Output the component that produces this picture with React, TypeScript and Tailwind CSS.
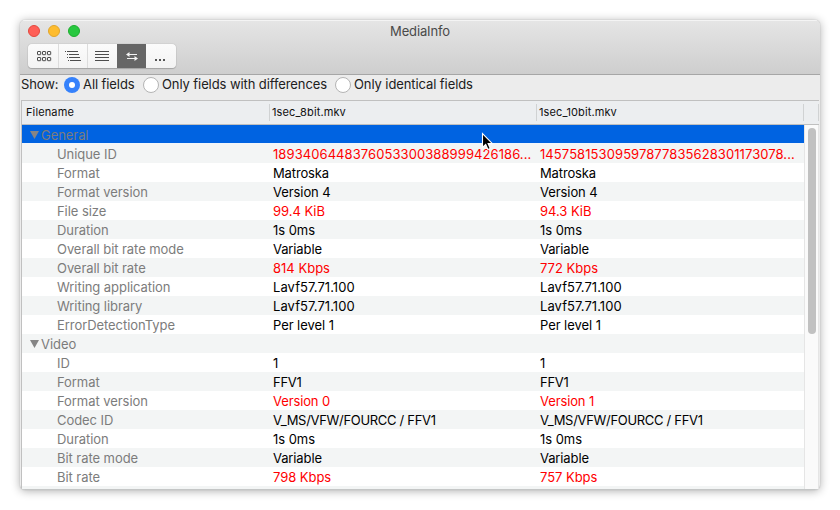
import React from "react";

type Row = { name: string; a?: string; b?: string; diff?: boolean; group?: boolean; spacing?: string };

const rows: Row[] = [
  { name: "General", group: true },
  { name: "Unique ID", a: "1893406448376053300388999426186...", b: "14575815309597877835628301173078...", diff: true, spacing: "tracking-[0.08px]" },
  { name: "Format", a: "Matroska", b: "Matroska", spacing: "tracking-[-0.13px]" },
  { name: "Format version", a: "Version 4", b: "Version 4", spacing: "tracking-[-0.08px]" },
  { name: "File size", a: "99.4 KiB", b: "94.3 KiB", diff: true, spacing: "tracking-[-0.04px]" },
  { name: "Duration", a: "1s 0ms", b: "1s 0ms", spacing: "tracking-[-0.05px]" },
  { name: "Overall bit rate mode", a: "Variable", b: "Variable", spacing: "tracking-[-0.12px]" },
  { name: "Overall bit rate", a: "814 Kbps", b: "772 Kbps", diff: true, spacing: "tracking-[0.01px]" },
  { name: "Writing application", a: "Lavf57.71.100", b: "Lavf57.71.100", spacing: "tracking-[0.06px]" },
  { name: "Writing library", a: "Lavf57.71.100", b: "Lavf57.71.100", spacing: "tracking-[0.06px]" },
  { name: "ErrorDetectionType", a: "Per level 1", b: "Per level 1", spacing: "tracking-[-0.06px]" },
  { name: "Video", group: true },
  { name: "ID", a: "1", b: "1" },
  { name: "Format", a: "FFV1", b: "FFV1", spacing: "tracking-[-0.25px]" },
  { name: "Format version", a: "Version 0", b: "Version 1", diff: true, spacing: "tracking-[-0.12px]" },
  { name: "Codec ID", a: "V_MS/VFW/FOURCC / FFV1", b: "V_MS/VFW/FOURCC / FFV1", spacing: "tracking-[-0.31px]" },
  { name: "Duration", a: "1s 0ms", b: "1s 0ms", spacing: "tracking-[-0.05px]" },
  { name: "Bit rate mode", a: "Variable", b: "Variable", spacing: "tracking-[-0.12px]" },
  { name: "Bit rate", a: "798 Kbps", b: "757 Kbps", diff: true, spacing: "tracking-[-0.04px]" },
  { name: "" },
];

function GridIcon() {
  return (
    <svg className="ml-[2px]" width="15" height="11" viewBox="0 0 15 11" fill="none" stroke="#4d4d4d">
      {[0.5, 6.5].map((y) => [0.5, 5.5, 10.5].map((x) => <rect key={`${x}-${y}`} x={x} y={y} width="3.2" height="3.2" rx="0.4" />))}
    </svg>
  );
}

function TreeIcon() {
  return (
    <svg width="16" height="11" viewBox="0 0 16 11" stroke="#4d4d4d">
      <path d="M0 .5h1M2 .5h11M2 3.5h1M4 3.5h10M2 6.5h1M4 6.5h11M3 9.5h1M5 9.5h11" />
    </svg>
  );
}

function LinesIcon() {
  return (
    <svg className="mr-[2px]" width="14" height="11" viewBox="0 0 14 11" stroke="#4d4d4d">
      <path d="M0 .5h14M0 3.5h14M0 6.5h14M0 9.5h14" />
    </svg>
  );
}

function SwapIcon() {
  return (
    <svg width="12" height="9" viewBox="0 0 12 9" fill="#f4f4f4">
      <path d="M0 2.5 3.5 0v2H11v1H3.5v2zM12 6.5 8.5 4v2H1v1h7.5v2z" />
    </svg>
  );
}

function Radio({ label, on }: { label: string; on?: boolean }) {
  return (
    <div className="flex items-center">
      <div className={`flex size-4 shrink-0 items-center justify-center rounded-full ${on ? "bg-[#3581fb]" : "border border-[#b4b4b4] bg-white"}`}>
        {on && <div className="size-1.5 rounded-full bg-white" />}
      </div>
      <span className="ml-[3px] text-[13px] tracking-[-0.09px] text-[#202020]">{label}</span>
    </div>
  );
}

function Line({ row, index }: { row: Row; index: number }) {
  const bg = index === 0 ? "bg-[#0063e1] border-b border-[#f0f5fb]" : index % 2 ? "bg-[#f3f5f5]" : "bg-white";
  const color = row.diff ? "text-[#ff0000]" : "text-black";
  const spacing = row.spacing ?? "";
  return (
    <div className={`flex h-[19px] shrink-0 items-center pt-[2px] text-[13px] leading-[17px] whitespace-pre ${bg}`}>
      <div className={`flex w-[251px] shrink-0 items-center tracking-[-0.06px] text-[#7c7c7c] ${row.group ? "pl-2" : "pl-[35px]"}`}>
        {row.group && (
          <svg className="mr-0.5 mb-px shrink-0" width="9" height="8" viewBox="0 0 9 8" fill="#858585">
            <path d="M0 0h9L4.5 8z" />
          </svg>
        )}
        <span>{row.name}</span>
      </div>
      <span className={`w-[267px] shrink-0 ${color} ${spacing}`}>{row.a}</span>
      <span className={`${color} ${spacing}`}>{row.b}</span>
    </div>
  );
}

export default function App() {
  return (
    <div className="relative h-[510px] w-[840px] overflow-hidden bg-white p-5 font-['Inter',sans-serif]">
      <div className="flex h-[470px] w-[800px] flex-col overflow-hidden rounded-[5px] bg-[#ececec] shadow-[0_0_1px_#999,0_1px_10px_rgba(0,0,0,0.32)]">
        <div className="flex h-[55px] shrink-0 flex-col border-t border-b border-t-[#f4f4f4] border-b-[#a6a6a6] bg-linear-to-b from-[#e5e5e5] to-[#cecece]">
          <div className="grid h-[21px] grid-cols-3 items-center">
            <div className="flex gap-2 pb-px pl-2">
              <div className="size-3 rounded-full border border-[#e2483e] bg-[#ff5f57]" />
              <div className="size-3 rounded-full border border-[#e1a52a] bg-[#febc2e]" />
              <div className="size-3 rounded-full border border-[#1dad2e] bg-[#28c840]" />
            </div>
            <div className="pt-px text-center text-[13px] tracking-[-0.15px] text-[#4a4a4a]">MediaInfo</div>
          </div>
          <div className="mt-[2px] ml-2 flex h-6 w-[148px] overflow-hidden rounded-[4px] bg-linear-to-b from-[#fbfbfb] to-[#f3f3f3] shadow-[0_0_1px_#888,0_1px_1px_rgba(0,0,0,0.2)]">
            <div className="flex w-[31px] items-center justify-center border-r border-[#dcdcdc]"><GridIcon /></div>
            <div className="flex w-[29px] items-center justify-center border-r border-[#dcdcdc]"><TreeIcon /></div>
            <div className="flex w-[29px] items-center justify-center"><LinesIcon /></div>
            <div className="flex w-[29px] items-center justify-center bg-[#666]"><SwapIcon /></div>
            <div className="flex flex-1 items-center gap-[2px] pt-2 pl-[9px]">
              <i className="size-[2px] bg-[#555]" /><i className="size-[2px] bg-[#555]" /><i className="size-[2px] bg-[#555]" />
            </div>
          </div>
        </div>
        <div className="flex h-[25px] shrink-0 items-center pb-[6px] pl-px text-[13px] text-[#202020]">
          <span className="w-[43px] shrink-0 tracking-[-0.15px]">Show:</span>
          <div className="w-[79px] shrink-0 whitespace-nowrap"><Radio label="All fields" on /></div>
          <div className="w-[192px] shrink-0 whitespace-nowrap"><Radio label="Only fields with differences" /></div>
          <Radio label="Only identical fields" />
        </div>
        <div className="mr-px ml-px flex min-h-0 flex-1 flex-col border-t border-l border-[#c0c0c0]">
          <div className="flex h-6 shrink-0 items-center border-b border-[#bfbfbf] bg-[#eceef0] text-[11px] tracking-[0.12px] text-[#101010]">
            <span className="w-[247px] shrink-0 pl-1">Filename</span>
            <div className="h-[17px] w-px bg-[#d0d2d3]" />
            <span className="w-[266px] shrink-0 pl-[2px]">1sec_8bit.mkv</span>
            <div className="h-[17px] w-px bg-[#d0d2d3]" />
            <span className="w-[266px] shrink-0 pl-[2px]">1sec_10bit.mkv</span>
            <div className="h-[17px] w-px bg-[#d0d2d3]" />
            <div className="h-[17px] w-[15px] border-r border-[#d0d2d3]" />
          </div>
          <div className="flex min-h-0 flex-1 border-b border-[#c4c6c6]">
            <div className="flex w-[782px] flex-col overflow-hidden">
              {rows.map((r, i) => <Line key={i} row={r} index={i} />)}
            </div>
            <div className="flex flex-1 justify-center border-r border-l border-[#e5e5e5] bg-[#fafafa] pt-[3px]">
              <div className="h-[206px] w-2 rounded-full bg-[#c1c1c1]" />
            </div>
          </div>
        </div>
      </div>
      <svg className="absolute top-[132px] left-[481px]" width="13" height="20" viewBox="0 0 13 20">
        <path d="M1.5 1.5v14l3.2-3 2.2 5 2.4-1-2.2-4.9h4.3z" fill="#000" stroke="#fff" strokeWidth="1.1" />
      </svg>
    </div>
  );
}
